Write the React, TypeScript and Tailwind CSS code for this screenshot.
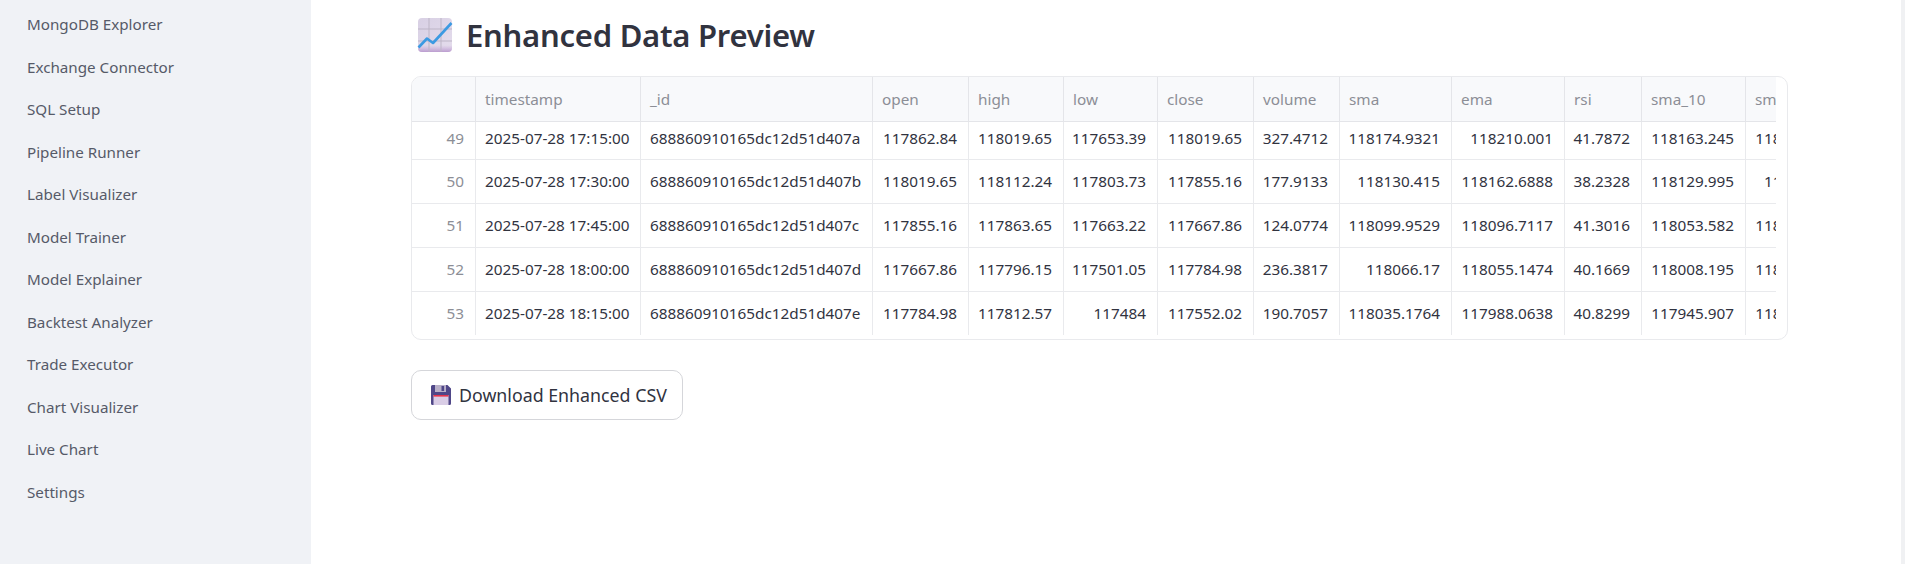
const navItems = [
  "MongoDB Explorer",
  "Exchange Connector",
  "SQL Setup",
  "Pipeline Runner",
  "Label Visualizer",
  "Model Trainer",
  "Model Explainer",
  "Backtest Analyzer",
  "Trade Executor",
  "Chart Visualizer",
  "Live Chart",
  "Settings",
];

const columns = [
  { name: "timestamp", width: "w-[165px]" },
  { name: "_id", width: "w-[232px]" },
  { name: "open", width: "w-[96px]" },
  { name: "high", width: "w-[95px]" },
  { name: "low", width: "w-[94px]" },
  { name: "close", width: "w-[96px]" },
  { name: "volume", width: "w-[86px]" },
  { name: "sma", width: "w-[112px]" },
  { name: "ema", width: "w-[113px]" },
  { name: "rsi", width: "w-[77px]" },
  { name: "sma_10", width: "w-[104px]" },
  { name: "sma_20", width: "w-[104px]" },
];

const rows = [
  { index: 49, timestamp: "2025-07-28 17:15:00", id: "688860910165dc12d51d407a", values: ["117862.84", "118019.65", "117653.39", "118019.65", "327.4712", "118174.9321", "118210.001", "41.7872", "118163.245", "118241.108"] },
  { index: 50, timestamp: "2025-07-28 17:30:00", id: "688860910165dc12d51d407b", values: ["118019.65", "118112.24", "117803.73", "117855.16", "177.9133", "118130.415", "118162.6888", "38.2328", "118129.995", "118221.05"] },
  { index: 51, timestamp: "2025-07-28 17:45:00", id: "688860910165dc12d51d407c", values: ["117855.16", "117863.65", "117663.22", "117667.86", "124.0774", "118099.9529", "118096.7117", "41.3016", "118053.582", "118185.367"] },
  { index: 52, timestamp: "2025-07-28 18:00:00", id: "688860910165dc12d51d407d", values: ["117667.86", "117796.15", "117501.05", "117784.98", "236.3817", "118066.17", "118055.1474", "40.1669", "118008.195", "118155.202"] },
  { index: 53, timestamp: "2025-07-28 18:15:00", id: "688860910165dc12d51d407e", values: ["117784.98", "117812.57", "117484", "117552.02", "190.7057", "118035.1764", "117988.0638", "40.8299", "117945.907", "118120.874"] },
];

function ChartEmoji() {
  return (
    <svg width="36" height="36" viewBox="0 0 36 36" className="shrink-0">
      <defs>
        <linearGradient id="tile" x1="0" y1="0" x2="1" y2="1">
          <stop offset="0" stopColor="#d8d0e4" />
          <stop offset="1" stopColor="#e4dcec" />
        </linearGradient>
        <linearGradient id="tileEdge" x1="0" y1="0" x2="0" y2="1">
          <stop offset="0.8" stopColor="#c7a9d8" stopOpacity="0" />
          <stop offset="1" stopColor="#bb9ccf" />
        </linearGradient>
      </defs>
      <rect x="1" y="1" width="34" height="34" rx="4" fill="url(#tile)" />
      <rect x="1" y="1" width="34" height="34" rx="4" fill="url(#tileEdge)" />
      <path d="M12 1v34M24 1v34M1 12h34M1 24h34" stroke="#bdb5c6" strokeWidth="1" fill="none" />
      <path d="M1.5 30.5 10 21.5l6 4.5L34.5 6" stroke="#3c9ae2" strokeWidth="2.6" fill="none" strokeLinejoin="round" />
    </svg>
  );
}

function SaveEmoji() {
  return (
    <svg width="20" height="20" viewBox="0 0 20 20" className="shrink-0">
      <path d="M1.5 0h15L20 3.5V18.5A1.5 1.5 0 0 1 18.5 20h-17A1.5 1.5 0 0 1 0 18.5V1.5A1.5 1.5 0 0 1 1.5 0z" fill="#4f4788" />
      <rect x="4" y="0" width="11" height="7" fill="#b9b0c9" />
      <rect x="10.5" y="1" width="2.6" height="5" fill="#4f4788" />
      <rect x="2.5" y="10" width="15" height="10" fill="#d9cde6" />
      <rect x="2.5" y="10" width="15" height="1.6" fill="#e5344b" />
    </svg>
  );
}

export default function App() {
  return (
    <div className="flex h-[564px] w-full overflow-hidden bg-white font-['Noto_Sans',sans-serif]">
      <aside className="w-[311px] shrink-0 bg-[#f0f2f6] pt-[3.5px]">
        <nav className="flex flex-col">
          {navItems.map((label) => (
            <a key={label} className="flex h-[42.5px] items-center pl-[27px] text-[15.2px] text-[#565a68]">
              {label}
            </a>
          ))}
        </nav>
      </aside>

      <main className="min-w-0 flex-1 pl-[100px]">
        <div className="flex h-[70px] items-center gap-[13px] pl-[6px]">
          <ChartEmoji />
          <h1 className="text-[31px] font-semibold tracking-[-0.25px] text-[#31333f]">Enhanced Data Preview</h1>
        </div>

        <div className="mt-[6px] w-[1377px] overflow-hidden rounded-[10px] border border-[#e9eaed] pr-[11px] pb-[4px]">
          <div className="overflow-hidden">
            <table className="w-[1438px] table-fixed border-separate border-spacing-0 text-[15.3px] text-[#31333f]">
              <colgroup>
                <col className="w-[64px]" />
                {columns.map((col) => (
                  <col key={col.name} className={col.width} />
                ))}
              </colgroup>
              <thead>
                <tr className="h-[45px] bg-[#f8f9fb] text-left text-[#8c8e96]">
                  <th className="border-r border-b border-[#e4e5e9] font-normal" />
                  {columns.map((col) => (
                    <th key={col.name} className="border-r border-b border-[#e4e5e9] px-[9px] font-normal">
                      {col.name}
                    </th>
                  ))}
                </tr>
              </thead>
              <tbody>
                {rows.map((row, i) => (
                  <tr key={row.index} className={i === 0 ? "h-[38px]" : i === 4 ? "h-[43px]" : "h-[44px]"}>
                    <td className={`border-r border-[#e9eaed] px-[11px] text-right text-[#8c8e96] ${i < 4 ? "border-b" : ""} ${i === 0 ? "pb-[4px]" : ""}`}>{row.index}</td>
                    <td className={`border-r border-[#e9eaed] px-[9px] whitespace-nowrap ${i < 4 ? "border-b" : ""} ${i === 0 ? "pb-[4px]" : ""}`}>{row.timestamp}</td>
                    <td className={`border-r border-[#e9eaed] px-[9px] whitespace-nowrap ${i < 4 ? "border-b" : ""} ${i === 0 ? "pb-[4px]" : ""}`}>{row.id}</td>
                    {row.values.map((value, j) => (
                      <td key={j} className={`border-r border-[#e9eaed] pr-[11px] pl-[4px] text-right whitespace-nowrap ${i < 4 ? "border-b" : ""} ${i === 0 ? "pb-[4px]" : ""}`}>
                        {value}
                      </td>
                    ))}
                  </tr>
                ))}
              </tbody>
            </table>
          </div>
        </div>

        <button className="mt-[30px] flex h-[50px] w-[272px] items-center gap-[8px] rounded-[10px] border border-[#d5d6da] bg-white pl-[19px] text-[17.8px] text-[#31333f]">
          <SaveEmoji />
          Download Enhanced CSV
        </button>
      </main>

      <div className="w-[4px] shrink-0 bg-[#f0f1f3]" />
    </div>
  );
}
